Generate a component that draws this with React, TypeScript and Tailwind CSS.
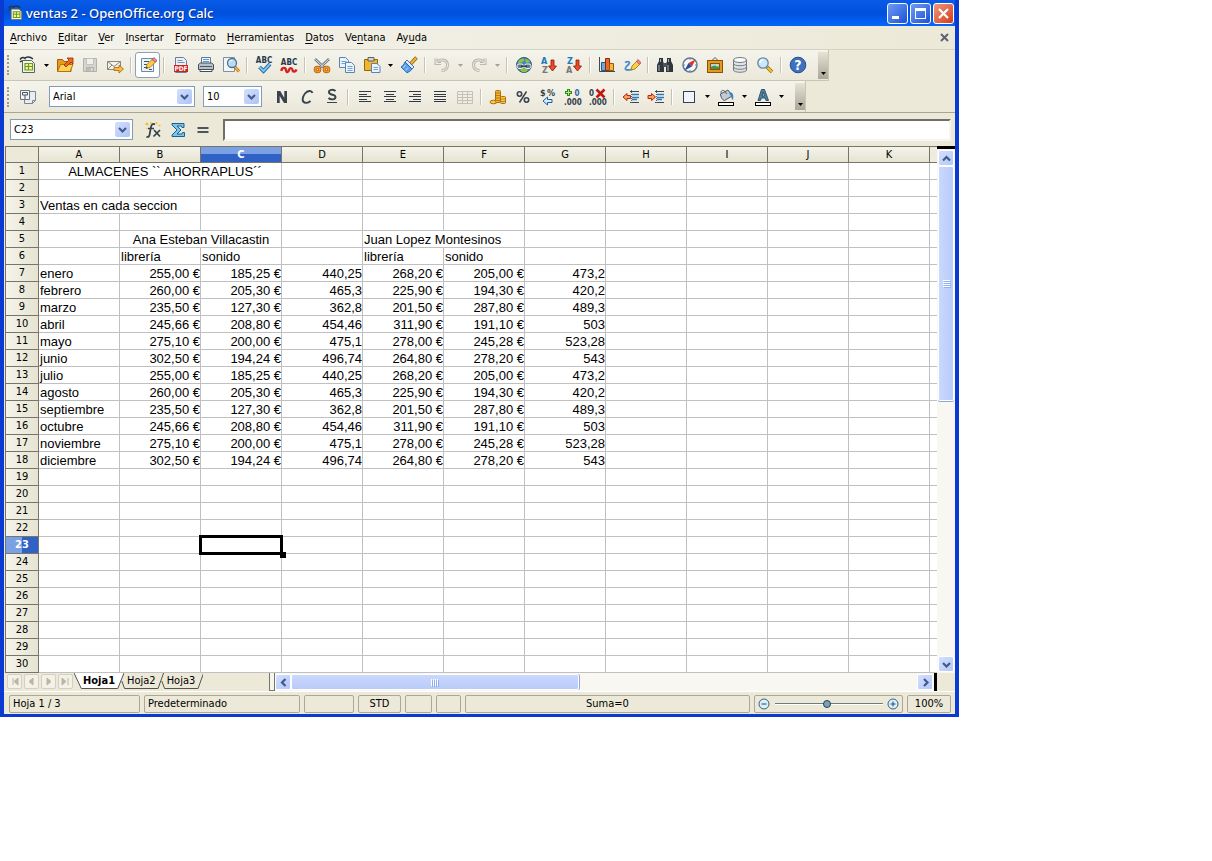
import type { ReactNode } from 'react';
import clsx from 'clsx';

type IconProps = { label: string; children: ReactNode };

const columns = ['A', 'B', 'C', 'D', 'E', 'F', 'G', 'H', 'I', 'J', 'K'];

const half = [
  ['255,00 €', '185,25 €', '440,25', '268,20 €', '205,00 €', '473,2'],
  ['260,00 €', '205,30 €', '465,3', '225,90 €', '194,30 €', '420,2'],
  ['235,50 €', '127,30 €', '362,8', '201,50 €', '287,80 €', '489,3'],
  ['245,66 €', '208,80 €', '454,46', '311,90 €', '191,10 €', '503'],
  ['275,10 €', '200,00 €', '475,1', '278,00 €', '245,28 €', '523,28'],
  ['302,50 €', '194,24 €', '496,74', '264,80 €', '278,20 €', '543'],
];

const months = [
  'enero', 'febrero', 'marzo', 'abril', 'mayo', 'junio',
  'julio', 'agosto', 'septiembre', 'octubre', 'noviembre', 'diciembre',
];

type Cell = { text: string; span?: number; align?: 'center' | 'right' };

const cells: Record<string, Cell> = {
  A1: { text: 'ALMACENES `` AHORRAPLUS´´', span: 3, align: 'center' },
  A3: { text: 'Ventas en cada seccion', span: 2 },
  B5: { text: 'Ana Esteban Villacastin', span: 2, align: 'center' },
  E5: { text: 'Juan Lopez Montesinos', span: 2 },
  B6: { text: 'librería' },
  C6: { text: 'sonido' },
  E6: { text: 'librería' },
  F6: { text: 'sonido' },
};

months.forEach((month, i) => {
  cells[`A${i + 7}`] = { text: month };
  half[i % 6].forEach((value, c) => {
    cells[`${columns[c + 1]}${i + 7}`] = { text: value, align: 'right' };
  });
});

/* toolbar pieces */

function Tool({ label, children }: IconProps) {
  return (
    <button type="button" aria-label={label} className="flex h-6 w-[25px] shrink-0 items-center justify-center">
      <svg width="18" height="18" viewBox="0 0 18 18" fill="none" aria-hidden="true">
        {children}
      </svg>
    </button>
  );
}

function Arrow({ label, off }: { label: string; off?: boolean }) {
  return (
    <button type="button" aria-label={label} className="flex h-6 w-3 shrink-0 items-center justify-center">
      <svg width="5" height="3" viewBox="0 0 5 3" aria-hidden="true">
        <path d="M0 0h5L2.5 3z" fill={off ? '#a5a396' : '#000'} />
      </svg>
    </button>
  );
}

function Sep() {
  return <span className="mx-[3px] h-4 w-0.5 shrink-0 border-r border-l border-r-white border-l-[#c5c2b2]" />;
}

function Grip() {
  return <span className="mr-1.5 ml-[3px] h-5 w-0 shrink-0 border-l-2 border-dotted border-[#9d9b8c]" />;
}

function Overflow() {
  return (
    <button
      type="button"
      aria-label="Más botones"
      className="flex h-[27px] w-2.5 items-end justify-center bg-linear-to-b from-[#e6e3d5] to-[#a9a798] pb-1"
    >
      <svg width="5" height="3" viewBox="0 0 5 3" aria-hidden="true">
        <path d="M0 0h5L2.5 3z" fill="#000" />
      </svg>
    </button>
  );
}

function Chevron({ dir }: { dir: 'up' | 'down' | 'left' | 'right' }) {
  const paths = {
    up: 'M1 6.5 4.5 3 8 6.5',
    down: 'M1 3 4.5 6.5 8 3',
    left: 'M6.5 1 3 4.5 6.5 8',
    right: 'M3 1l3.5 3.5L3 8',
  };
  return (
    <svg width="9" height="9" viewBox="0 0 9 9" fill="none" aria-hidden="true">
      <path d={paths[dir]} stroke="#42598c" strokeWidth="2.2" />
    </svg>
  );
}

function Combo({ label, value, className }: { label: string; value: string; className: string }) {
  return (
    <span className={clsx('relative flex h-[21px] shrink-0 items-center border border-[#7f9db9] bg-white', className)}>
      <select aria-label={label} defaultValue={value} className="h-full w-full appearance-none bg-transparent pl-[3px] outline-none">
        <option>{value}</option>
      </select>
      <span className="pointer-events-none absolute top-0.5 right-0.5 bottom-0.5 flex w-[15px] items-center justify-center rounded-[2px] bg-linear-to-br from-[#d3dffd] to-[#aec3f5]">
        <Chevron dir="down" />
      </span>
    </span>
  );
}

function SheetGlyph() {
  return (
    <>
      <path d="M1 3.500c2-3 4-2 5-1 1-2 5-2 8 .5M1 6c2-2 3-1.500 4-1" stroke="#2c3338" strokeWidth="1.500" />
      <path d="M3.500 4.500h9l3 3v9h-12z" fill="#f1f4ee" stroke="#59655c" />
      <path d="M6 7.500h7.500v6.500H6z" fill="#f3f79a" stroke="#6d9c1d" strokeWidth="1.200" />
      <path d="M6 10.500h7.500M9.500 7.500V14" stroke="#6d9c1d" strokeWidth="1.200" />
    </>
  );
}

function TextLines({ rows }: { rows: [number, number][] }) {
  return (
    <path
      d={rows.map(([x, w], i) => `M${x} ${3.5 + i * 2.5}h${w}`).join('')}
      stroke="#333a40"
      shapeRendering="crispEdges"
    />
  );
}

function StandardBar() {
  return (
    <div role="toolbar" aria-label="Estándar" className="flex h-[31px] w-[825px] max-w-full items-center overflow-hidden border-r border-b border-[#c9c6b6] bg-linear-to-b from-[#f5f4ec] to-[#ebe8d9]">
      <Grip />
      <Tool label="Nuevo"><SheetGlyph /></Tool>
      <Arrow label="Tipos de documento" />
      <Tool label="Abrir">
        <path d="M1.500 15.500v-12h5l1.500 2h7v10z" fill="#e79a1c" stroke="#a85f06" />
        <path d="M1.500 15.500l3-7h12.500l-3 7z" fill="#fcd354" stroke="#b8720c" />
        <path d="M8 9l5-5-2-2h6v6l-2-2-5 5z" fill="#f26a1b" stroke="#8e2c06" strokeWidth=".8" />
      </Tool>
      <Tool label="Guardar">
        <path d="M2.500 2.500h13v13h-13z" fill="#d5d4d0" stroke="#b2b1ab" />
        <path d="M5.500 2.500h7v6h-7z" fill="#f0f0ec" stroke="#c2c1bb" />
        <path d="M5.500 11.500h7v4h-7z" fill="#bdbcb6" stroke="#b2b1ab" />
        <path d="M10 12.500h1.500v2H10z" fill="#f2f2ee" />
      </Tool>
      <Tool label="Documento como e-mail">
        <path d="M1.500 5.500h13v8h-13z" fill="#f4f3ee" stroke="#88867c" />
        <path d="M1.500 5.500l6.500 5 6.500-5M1.500 13.500l4.500-4.500" stroke="#88867c" />
        <path d="M8 11.500h5v-2.500l4.500 4-4.500 4v-2.500H8z" fill="#fdbb3c" stroke="#a4620d" strokeWidth=".8" />
      </Tool>
      <Sep />
      <span className="flex h-[26px] w-[25px] shrink-0 items-center justify-center rounded-[3px] border border-[#8aa2b8] bg-white">
        <Tool label="Editar archivo">
          <path d="M2.500 2.500h12v13h-12z" fill="#eaf2fa" stroke="#6c89a6" />
          <path d="M5 5.500h5M5 8.500h3M5 11.500h2M10 13.500h3" stroke="#3b5168" />
          <path d="M7 12.500l1-4 6-6 3 3-6 6z" fill="#fbcf44" stroke="#9c7014" strokeWidth=".8" />
          <path d="M13 3.500l1.800-2L18 4.500l-1.800 1.800z" fill="#ee8690" stroke="#a4434d" strokeWidth=".7" />
          <path d="M7 12.500l.5-2 1.500 1.500z" fill="#333" />
        </Tool>
      </span>
      <Sep />
      <Tool label="Exportar en formato PDF">
        <path d="M3.500 1.500h8l3 3v12h-11z" fill="#e8eff7" stroke="#6b7e95" />
        <path d="M5.500 4.500h5M5.500 6.500h7" stroke="#7696b5" />
        <rect x="2" y="9" width="14" height="7" fill="#cf1f1f" />
        <text x="9" y="15" textAnchor="middle" fontSize="6.500" fontWeight="bold" fill="#fff">PDF</text>
      </Tool>
      <Tool label="Imprimir">
        <path d="M4.500 1.500h9v6h-9z" fill="#eef6ff" stroke="#66798c" />
        <path d="M6 3.500h6M6 5.500h6" stroke="#5a9ad5" />
        <path d="M1.500 8.500l2-1.500h11l2 1.500v5h-15z" fill="#b9c1c9" stroke="#414d59" />
        <path d="M3 13.500h12v2H3z" fill="#fff" stroke="#414d59" />
        <path d="M3 10.500h12" stroke="#4b5763" />
      </Tool>
      <Tool label="Vista preliminar">
        <path d="M1.500 1.500h11v14h-11z" fill="#f1f5fa" stroke="#7e90a4" />
        <path d="M12.500 10.500l4.500 5" stroke="#c27718" strokeWidth="3" />
        <path d="M13 11l3.800 4.300" stroke="#f8b945" strokeWidth="1.300" />
        <circle cx="10" cy="7" r="4.500" fill="#b7dcf5" stroke="#4f7391" strokeWidth="1.300" />
        <path d="M7.500 6.500q.8-2.500 3-2.300" stroke="#fff" />
      </Tool>
      <Sep />
      <Tool label="Revisión ortográfica">
        <text x="9" y="7" textAnchor="middle" fontSize="8" fontWeight="bold" fill="#26384a">ABC</text>
        <path d="M4.500 11l4 4 6.500-7" stroke="#155c98" strokeWidth="3.800" />
        <path d="M4.500 11l4 4 6.500-7" stroke="#7dc7ef" strokeWidth="2" />
      </Tool>
      <Tool label="Revisión automática">
        <text x="9" y="9" textAnchor="middle" fontSize="8" fontWeight="bold" fill="#26384a">ABC</text>
        <path d="M1.500 15c0-4 4-4 4.500-1s2.500 2.500 3 0 3-2.500 3.500 0 3 2 4-.5" stroke="#d42020" strokeWidth="2.400" />
      </Tool>
      <Sep />
      <Tool label="Cortar">
        <path d="M2 3l9.500 9M16 3l-9.500 9" stroke="#6f7b86" strokeWidth="2.600" />
        <path d="M2.300 3.300l9 8.500M15.700 3.300l-9 8.500" stroke="#dce4ea" />
        <circle cx="4.500" cy="13.500" r="2.300" stroke="#b65d08" strokeWidth="3" />
        <circle cx="13.500" cy="13.500" r="2.300" stroke="#b65d08" strokeWidth="3" />
        <circle cx="4.500" cy="13.500" r="2.300" stroke="#f3992a" strokeWidth="1.500" />
        <circle cx="13.500" cy="13.500" r="2.300" stroke="#f3992a" strokeWidth="1.500" />
      </Tool>
      <Tool label="Copiar">
        <path d="M1.500 1.500h6l3 3v7h-9z" fill="#eaf2fb" stroke="#5a83ae" />
        <path d="M3.500 5.500h5M3.500 7.500h5" stroke="#70a2d2" />
        <path d="M7.500 6.500h6l3 3v7h-9z" fill="#eaf2fb" stroke="#5a83ae" />
        <path d="M9.500 10.500h5M9.500 12.500h5M9.500 14.500h5" stroke="#70a2d2" />
      </Tool>
      <Tool label="Pegar">
        <path d="M1.500 3.500h13v11h-13z" fill="#f2b62c" stroke="#94660c" />
        <path d="M5 1.500h6v3.500H5z" fill="#d4d5d6" stroke="#5d605f" />
        <path d="M8.500 7.500h5.500l3 3v6h-8.500z" fill="#eaf2fb" stroke="#5a83ae" />
        <path d="M10.500 11.500h4.500M10.500 13.500h4.500" stroke="#70a2d2" />
      </Tool>
      <Arrow label="Opciones de pegado" />
      <Tool label="Pincel de formato">
        <path d="M16.500 1.500l-5.500 6" stroke="#8f6013" strokeWidth="3.600" />
        <path d="M16.200 1.800L11 7.500" stroke="#f7b92e" strokeWidth="2" />
        <path d="M7 4l7 7-2 2-7-7z" fill="#dbeaf8" stroke="#2c63a7" strokeWidth=".9" />
        <path d="M5 6l7 7c-1 2-3.500 3-5 3.800L1 11c2-1 3-3 4-5z" fill="#5a9fe8" stroke="#1d5db0" strokeWidth=".9" />
        <path d="M5.500 9l-2.500 3M8 11.500L5.500 14.500" stroke="#bfdcf8" />
      </Tool>
      <Sep />
      <Tool label="Deshacer">
        <path d="M3 2.500v5h5M3.500 7c3.500-5 11-3.500 11 2 0 3-2 5.500-6 5.500" stroke="#bbb9af" strokeWidth="3" />
        <path d="M3 2.500v5h5M3.500 7c3.500-5 11-3.500 11 2 0 3-2 5.500-6 5.500" stroke="#efede3" />
      </Tool>
      <Arrow label="Lista de deshacer" off />
      <Tool label="Restaurar">
        <path d="M15 2.500v5h-5M14.500 7c-3.500-5-11-3.500-11 2 0 3 2 5.500 6 5.500" stroke="#bbb9af" strokeWidth="3" />
        <path d="M15 2.500v5h-5M14.500 7c-3.500-5-11-3.500-11 2 0 3 2 5.500 6 5.500" stroke="#efede3" />
      </Tool>
      <Arrow label="Lista de restaurar" off />
      <Sep />
      <Tool label="Hiperenlace">
        <circle cx="9" cy="9" r="7.500" fill="#4b83b8" stroke="#31577a" />
        <path d="M3 6c2-4 5-4 6-3s-1 3-2 3-2 2-4 1zM10 3c3 0 4 1 5 3l-4 1zM5 14c2-2 6-2 8 0-2 3-6 3-8 0z" fill="#8cc63f" />
        <rect x="2" y="8" width="6.500" height="4.500" rx="2" fill="#687987" stroke="#eef3f6" />
        <rect x="9.500" y="8" width="6.500" height="4.500" rx="2" fill="#687987" stroke="#eef3f6" />
        <path d="M6 10.200h6" stroke="#24343f" strokeWidth="1.400" />
      </Tool>
      <Tool label="Orden ascendente">
        <text x="1" y="8" fontSize="9" fontWeight="bold" fill="#167bb8">A</text>
        <text x="2" y="17" fontSize="9" fontWeight="bold" fill="#77777a">Z</text>
        <path d="M11 4h3v6h2.500l-4 5-4-5H11z" fill="#ee4a26" stroke="#8c1606" strokeWidth=".8" />
      </Tool>
      <Tool label="Orden descendente">
        <text x="2" y="8" fontSize="9" fontWeight="bold" fill="#167bb8">Z</text>
        <text x="1" y="17" fontSize="9" fontWeight="bold" fill="#77777a">A</text>
        <path d="M11 4h3v6h2.500l-4 5-4-5H11z" fill="#ee4a26" stroke="#8c1606" strokeWidth=".8" />
      </Tool>
      <Sep />
      <Tool label="Gráfico">
        <path d="M1.500 1v14.500H17" stroke="#3c4a58" />
        <path d="M3.500 6.500h4v8h-4z" fill="#67aede" stroke="#20567f" />
        <path d="M7.500 2.500h4v12h-4z" fill="#ee6429" stroke="#8d2a06" />
        <path d="M11.500 7.500h4v7h-4z" fill="#f8b43b" stroke="#935b0a" />
      </Tool>
      <Tool label="Mostrar funciones de dibujo">
        <path d="M2 6.500c4-2 6 0 3 2.500s-4 5 0 5 4-1 5-1.500" stroke="#4a8ccc" strokeWidth="1.800" />
        <path d="M8 14l1-4 5.500-5.500 3 3-5.500 5.500z" fill="#fbcf44" stroke="#9c7014" strokeWidth=".8" />
        <path d="M13.500 5.500l1.500-2 3 3-1.500 1.700z" fill="#ee8690" stroke="#a4434d" strokeWidth=".7" />
      </Tool>
      <Sep />
      <Tool label="Buscar y reemplazar">
        <path d="M3 2h4v3l1 3v8H1V9l2-4zM15 2h-4v3l-1 3v8h7V9l-2-4z" fill="#30363c" />
        <path d="M7 7h4v4H7z" fill="#4b535a" />
        <path d="M3 9v6M12 9v6M4.500 3v3M12.500 3v3" stroke="#a7b0b7" />
      </Tool>
      <Tool label="Navegador">
        <circle cx="9" cy="9" r="7" fill="#f3f8fc" stroke="#63788b" strokeWidth="1.500" />
        <path d="M9 3v1M9 14v1M3 9h1M14 9h1" stroke="#63788b" />
        <path d="M14.500 3.500L11 10.500 7.500 7z" fill="#e33224" />
        <path d="M3.500 14.500L7.500 7l3.500 3.500z" fill="#274e9b" />
      </Tool>
      <Tool label="Gallery">
        <path d="M6 4.500L9 1.500l3 3" stroke="#67553b" />
        <rect x="1.500" y="4.500" width="15" height="12" fill="#e8981e" stroke="#87540a" />
        <rect x="4.500" y="7.500" width="9" height="6" fill="#a6d9ee" stroke="#87540a" />
        <path d="M5 13v-2q4-2.500 8 0v2z" fill="#45934c" />
        <circle cx="11" cy="9.500" r="1" fill="#fbe15b" />
      </Tool>
      <Tool label="Fuentes de datos">
        <path d="M2.500 4v10c0 3 13 3 13 0V4" fill="#dfe3e6" stroke="#727b82" />
        <ellipse cx="9" cy="4" rx="6.500" ry="2.500" fill="#f8f9fa" stroke="#727b82" />
        <path d="M2.500 7.500c0 3 13 3 13 0M2.500 11c0 3 13 3 13 0" stroke="#727b82" />
      </Tool>
      <Tool label="Escala">
        <path d="M11 11l5 5" stroke="#926a16" strokeWidth="3.600" />
        <path d="M11.500 11.500l4.500 4.500" stroke="#f6c13c" strokeWidth="2" />
        <circle cx="7" cy="7" r="5.200" fill="#cde7f9" stroke="#5f86a8" strokeWidth="1.300" />
        <path d="M4 7q.3-3 3-3" stroke="#fff" strokeWidth="1.500" />
      </Tool>
      <Sep />
      <Tool label="Ayuda">
        <circle cx="9" cy="9" r="7.800" fill="#3d70bd" stroke="#234f92" />
        <text x="9" y="14" textAnchor="middle" fontSize="14" fontWeight="bold" fill="#fff">?</text>
      </Tool>
      <span className="ml-auto flex"><Overflow /></span>
    </div>
  );
}

function IndentGlyph({ out }: { out?: boolean }) {
  return (
    <>
      <path d="M8 3.500h9M8 14.500h9" stroke="#3b4854" />
      <path d="M10 6.500h7M10 9.500h7M10 11.500h5" stroke="#2e7dbb" strokeWidth="1.400" />
      <path d="M9.500 2v14" stroke="#59656f" strokeDasharray="1 1" />
      <path
        d={out ? 'M1 9l4-3.500v2h3.500v3H5v2z' : 'M8.500 9l-4-3.500v2H1v3h3.500v2z'}
        fill="#f9a15d"
        stroke="#b52a0c"
      />
    </>
  );
}

function FormatBar() {
  return (
    <div role="toolbar" aria-label="Formato" className="flex h-[31px] w-[802px] max-w-full items-center overflow-hidden border-r border-[#c9c6b6] bg-linear-to-b from-[#f5f4ec] to-[#ebe8d9]">
      <Grip />
      <Tool label="Estilo y formato">
        <path d="M5.500 3.500h11v9l-3 3h-8z" fill="#e9edf1" stroke="#7c868f" />
        <path d="M1.500 2.500h9v9h-9z" fill="#f3f4f5" stroke="#6a747d" />
        <path d="M3.500 4.500h5v2.500h-5zM6 7v4" stroke="#4b555e" />
        <path d="M16.500 12.500h-3v3" stroke="#7c868f" />
      </Tool>
      <Combo label="Nombre de fuente" value="Arial" className="ml-[9px] w-[146px]" />
      <Combo label="Tamaño de fuente" value="10" className="mr-[7px] ml-2 w-[59px]" />
      <Tool label="Negrita">
        <path d="M4 15V3h3.300l4 7V3H14v12h-3L6.700 8v7z" fill="#3a434c" />
      </Tool>
      <Tool label="Cursiva">
        <path d="M14.500 5c-1-3-5-2.500-7.500.5s-3.500 8-.5 9 5-.5 6-1.500" stroke="#3a434c" strokeWidth="1.900" />
      </Tool>
      <Tool label="Subrayado">
        <path d="M12.500 3c-2-2-7-1.500-6.500 1.500s6.500 1.500 6.500 4.500-5 3-7 1" stroke="#3a434c" strokeWidth="1.900" />
        <path d="M4 14.500h10" stroke="#3a434c" />
      </Tool>
      <Sep />
      <Tool label="Alinear a la izquierda"><TextLines rows={[[3, 12], [3, 8], [3, 12], [3, 8], [3, 12]]} /></Tool>
      <Tool label="Centrar horizontalmente"><TextLines rows={[[3, 12], [5, 8], [3, 12], [5, 8], [3, 12]]} /></Tool>
      <Tool label="Alinear a la derecha"><TextLines rows={[[3, 12], [7, 8], [3, 12], [7, 8], [3, 12]]} /></Tool>
      <Tool label="Justificado"><TextLines rows={[[3, 12], [3, 12], [3, 12], [3, 12], [3, 12]]} /></Tool>
      <Tool label="Combinar celdas">
        <path d="M1.500 3.500h15v12h-15zM1.500 6.500h15M1.500 9.500h15M1.500 12.500h15M6.500 3.500v12M11.500 3.500v12" stroke="#c4c2b7" />
      </Tool>
      <Sep />
      <Tool label="Formato numérico: moneda">
        <ellipse cx="4.500" cy="14" rx="3.500" ry="1.800" fill="#f8c94e" stroke="#ad700d" />
        <rect x="6.500" y="2.500" width="5" height="12" rx="1" fill="#f2b02c" stroke="#ad700d" />
        <rect x="11.500" y="8.500" width="5" height="7" rx="1" fill="#f8c94e" stroke="#ad700d" />
        <path d="M6.500 5h5M6.500 7.500h5M6.500 10h5M6.500 12.500h5M12 11h4M12 13.500h4" stroke="#ad700d" strokeWidth=".8" />
      </Tool>
      <Tool label="Formato numérico: porcentaje">
        <circle cx="5.500" cy="6" r="2.200" stroke="#38434d" strokeWidth="1.600" />
        <circle cx="12.500" cy="12" r="2.200" stroke="#38434d" strokeWidth="1.600" />
        <path d="M12.500 3.500l-7 11" stroke="#38434d" strokeWidth="1.500" />
      </Tool>
      <Tool label="Formato numérico: predeterminado">
        <text x="1" y="8" fontSize="9" fontWeight="bold" fill="#35414c">$</text>
        <text x="8" y="8" fontSize="9" fontWeight="bold" fill="#35414c">%</text>
        <path d="M4 13l4.500-4v2.500H13v3H8.500V17z" fill="#d8ecfb" stroke="#1860a8" />
      </Tool>
      <Tool label="Agregar decimal">
        <path d="M4.500 1v7M1 4.500h7" stroke="#2c8a17" strokeWidth="3" />
        <path d="M4.500 2v5M2 4.500h5" stroke="#b5eb84" />
        <text x="10.500" y="8" fontSize="8" fontWeight="bold" fill="#2b69a8">0</text>
        <text x="0" y="17" fontSize="8" fontWeight="bold" fill="#35414c">.000</text>
      </Tool>
      <Tool label="Eliminar decimal">
        <text x="0" y="8" fontSize="8" fontWeight="bold" fill="#35414c">0</text>
        <text x="0" y="17" fontSize="8" fontWeight="bold" fill="#35414c">.000</text>
        <path d="M7.500 1.500l8 8M15.500 1.500l-8 8" stroke="#bf1712" strokeWidth="2.600" />
      </Tool>
      <Sep />
      <Tool label="Reducir sangría"><IndentGlyph out /></Tool>
      <Tool label="Aumentar sangría"><IndentGlyph /></Tool>
      <Sep />
      <Tool label="Borde">
        <rect x="3.500" y="3.500" width="11" height="11" fill="#eff5fb" stroke="#34404b" />
      </Tool>
      <Arrow label="Estilos de borde" />
      <Tool label="Color de fondo">
        <path d="M3.500 6l7.500-4 4 6-7.500 4.500c-2 0-4-4-4-6.500z" fill="#c1cbd3" stroke="#4b5862" />
        <path d="M4.500 6c-2-4 3-5.500 5 0" stroke="#4b5862" />
        <path d="M12 4c4 0 5 3 4 8-2-1-1-4-3-5z" fill="#3d83bd" />
        <rect x="1.500" y="14.500" width="15" height="3" fill="#fff" stroke="#000" />
      </Tool>
      <Arrow label="Colores de fondo" />
      <Tool label="Color de fuente">
        <path d="M4 12.500L7.500 1.500h3l4 11H12l-.8-2.500H7.300l-.8 2.500zM8 8h2.500L9.200 4z" fill="#4a84a6" stroke="#2a4b62" strokeWidth=".9" />
        <rect x="1.500" y="14.500" width="15" height="3" fill="#fff" stroke="#000" />
      </Tool>
      <Arrow label="Colores de fuente" />
      <span className="ml-auto flex"><Overflow /></span>
    </div>
  );
}

const windowButton = 'flex size-[21px] items-center justify-center rounded-[3px] border border-white';

function TitleBar() {
  return (
    <header className="flex h-[26px] items-center bg-linear-to-b from-[#0a5be8] via-[#0050dd] to-[#0566fb] pr-px pl-1">
      <svg width="16" height="16" viewBox="0 0 18 18" fill="none" aria-hidden="true"><SheetGlyph /></svg>
      <h1 className="ml-0.5 font-['Noto_Sans',sans-serif] text-[13px] font-medium text-white [text-shadow:1px_1px_0_#0a2a8c]">
        ventas 2 - OpenOffice.org Calc
      </h1>
      <div className="ml-auto flex gap-0.5">
        <button type="button" aria-label="Minimizar" className={clsx(windowButton, 'bg-linear-to-br from-[#6f9bf5] to-[#1d4fd6]')}>
          <svg width="13" height="13" viewBox="0 0 13 13" aria-hidden="true"><path d="M1 9h7v3H1z" fill="#fff" /></svg>
        </button>
        <button type="button" aria-label="Maximizar" className={clsx(windowButton, 'bg-linear-to-br from-[#6f9bf5] to-[#1d4fd6]')}>
          <svg width="13" height="13" viewBox="0 0 13 13" aria-hidden="true"><path d="M1 1h11v11H1zM2 4v7h9V4z" fill="#fff" fillRule="evenodd" /></svg>
        </button>
        <button type="button" aria-label="Cerrar" className={clsx(windowButton, 'bg-linear-to-br from-[#f0957a] to-[#d03a10]')}>
          <svg width="13" height="13" viewBox="0 0 13 13" aria-hidden="true"><path d="M2 2l9 9M11 2l-9 9" stroke="#fff" strokeWidth="2.200" /></svg>
        </button>
      </div>
    </header>
  );
}

// text before the mnemonic, the mnemonic, text after it
const menus = [
  ['', 'A', 'rchivo'],
  ['', 'E', 'ditar'],
  ['', 'V', 'er'],
  ['', 'I', 'nsertar'],
  ['', 'F', 'ormato'],
  ['', 'H', 'erramientas'],
  ['', 'D', 'atos'],
  ['Ve', 'n', 'tana'],
  ['Ay', 'u', 'da'],
];

function MenuBar() {
  return (
    <nav aria-label="Menú" className="flex h-6 items-center gap-[11px] border-b border-[#d5d2c3] bg-linear-to-r from-[#f4f3ec] to-[#ece9d8] pr-1.5 pl-1.5">
      {menus.map(([before, key, after]) => (
        <button key={key} type="button">
          {before}
          <span className="underline underline-offset-2">{key}</span>
          {after}
        </button>
      ))}
      <button type="button" aria-label="Cerrar documento" className="ml-auto">
        <svg width="9" height="9" viewBox="0 0 9 9" aria-hidden="true">
          <path d="M1 1l7 7M8 1L1 8" stroke="#5a6470" strokeWidth="2" />
        </svg>
      </button>
    </nav>
  );
}

function FormulaBar() {
  return (
    <div className="flex h-[34px] items-center border-t border-[#a7a594] bg-[#ece9d8] pr-1 pl-1.5">
      <Combo label="Cuadro de nombre" value="C23" className="w-[123px]" />
      <span className="ml-[7px] flex">
        <Tool label="Asistente: funciones">
          <path d="M11 3.500c-2-1.500-3.500 0-4 2.500l-1.500 8c-.4 2-1.700 2.500-3 1.500M4 7.500h6" stroke="#34404b" strokeWidth="1.700" />
          <path d="M10 9l6 6.500M16 9l-6.500 6.500" stroke="#34404b" strokeWidth="1.700" />
          <path d="M3 1.500v3M1.500 3h3M7 1v2M12.500 1v2M14.500 4.500h2M3 7v1" stroke="#f0bd2b" strokeWidth="1.300" />
        </Tool>
        <Tool label="Suma">
          <path d="M3 2.500h12v4h-2l-.5-1.500H8l4 4-4 4h5l.5-1.500h2v4H3v-1.500L8 9 3 4z" fill="#7fc2ea" stroke="#13629b" />
        </Tool>
        <Tool label="Función">
          <path d="M3.500 7h11M3.500 11h11" stroke="#4b555e" strokeWidth="1.800" />
        </Tool>
      </span>
      <input
        aria-label="Línea de entrada"
        className="ml-2 h-[22px] min-w-0 flex-1 border-2 border-t-[#716f64] border-r-[#f6f5ef] border-b-[#f6f5ef] border-l-[#716f64] bg-white px-1 outline-none"
      />
    </div>
  );
}

const headBase = 'border-r border-b border-[#77756a] p-0';

function GridRow({ row }: { row: number }) {
  const tds: ReactNode[] = [];
  for (let c = 0; c < columns.length; ) {
    const cell = cells[`${columns[c]}${row}`];
    const span = cell?.span ?? 1;
    const selected = row === 23 && columns[c] === 'C';
    tds.push(
      <td
        key={c}
        colSpan={span}
        className={clsx(
          'border-r border-b border-[#c0c0c0] pt-0.5 pb-0 whitespace-nowrap',
          span === 3 ? 'pl-2.5' : 'pl-px',
          cell?.align === 'center' && 'text-center',
          cell?.align === 'right' && 'text-right',
          selected && 'relative',
        )}
      >
        {cell?.text}
        {selected && (
          <span className="absolute -inset-0.5 border-3 border-black">
            <span className="absolute -right-1.5 -bottom-1.5 size-1.5 bg-black" />
          </span>
        )}
      </td>,
    );
    c += span;
  }
  return (
    <tr className="h-[17px]">
      <th
        scope="row"
        className={clsx(
          headBase,
          "border-l font-['DejaVu_Sans_Condensed',sans-serif] text-[11px]",
          row === 23
            ? 'bg-linear-to-r from-[#7ba0e4] from-50% to-[#2f62c4] to-50% font-bold text-white'
            : 'bg-linear-to-r from-[#f5f4ea] to-[#e6e3d1] font-normal',
        )}
      >
        {row}
      </th>
      {tds}
      <td className="border-b border-[#c0c0c0] p-0" />
    </tr>
  );
}

function Grid() {
  return (
    <table className="w-full table-fixed border-separate border-spacing-0 bg-white font-['Liberation_Sans',Arial,sans-serif] text-[13px] leading-[14px]">
      <colgroup>
        <col className="w-[34px]" />
        {columns.map((c) => <col key={c} className="w-[81px]" />)}
        <col />
      </colgroup>
      <thead>
        <tr className="h-[17px] font-['DejaVu_Sans_Condensed',sans-serif] text-[11px] leading-[15px]">
          <td className={clsx(headBase, 'border-t border-l bg-[#ece9d8]')} />
          {columns.map((c) => (
            <th
              key={c}
              scope="col"
              className={clsx(
                headBase,
                'border-t',
                c === 'C'
                  ? 'bg-linear-to-b from-[#7ba0e4] from-50% to-[#2f62c4] to-50% font-bold text-white'
                  : 'bg-linear-to-b from-[#f5f4ea] to-[#e6e3d1] font-normal',
              )}
            >
              {c}
            </th>
          ))}
          <td className="border-t border-b border-[#77756a] bg-[#efecdf] p-0" />
        </tr>
      </thead>
      <tbody>
        {Array.from({ length: 30 }, (_, i) => <GridRow key={i} row={i + 1} />)}
      </tbody>
    </table>
  );
}

const scrollButton = 'flex size-4 shrink-0 items-center justify-center rounded-[2px] border border-white bg-linear-to-br from-[#d3dffd] to-[#b4c8f8]';

function VerticalScroll() {
  return (
    <div className="flex w-[18px] shrink-0 flex-col items-center bg-[#f8f7f2] pb-px">
      <span className="mb-px h-[3px] w-full shrink-0 bg-black" />
      <button type="button" aria-label="Subir" className={scrollButton}><Chevron dir="up" /></button>
      <div className="w-4 flex-1">
        <div className="flex h-[48%] flex-col items-center justify-center gap-px rounded-[2px] border border-white bg-linear-to-r from-[#cad8fd] to-[#b9cbf9] shadow-[0_1px_0_#8fa8d8]">
          {[0, 1, 2, 3].map((i) => <i key={i} className="h-px w-[7px] bg-white shadow-[1px_1px_0_#8cb0f8]" />)}
        </div>
      </div>
      <button type="button" aria-label="Bajar" className={scrollButton}><Chevron dir="down" /></button>
    </div>
  );
}

function HorizontalScroll() {
  return (
    <div className="flex h-[18px] min-w-0 flex-1 items-center bg-[#f8f7f2]">
      <button type="button" aria-label="Izquierda" className={scrollButton}><Chevron dir="left" /></button>
      <div className="h-4 flex-1">
        <div className="flex h-full w-[46%] items-center justify-center gap-px rounded-[2px] border border-white bg-linear-to-b from-[#cad8fd] to-[#b9cbf9] shadow-[1px_0_0_#8fa8d8]">
          {[0, 1, 2, 3].map((i) => <i key={i} className="h-[7px] w-px bg-white shadow-[1px_1px_0_#8cb0f8]" />)}
        </div>
      </div>
      <button type="button" aria-label="Derecha" className={scrollButton}><Chevron dir="right" /></button>
      <span className="ml-px h-full w-[3px] bg-black" />
    </div>
  );
}

const steps = [
  ['Primera hoja', 'M3 1v7M8 1v7L4 4.500z'],
  ['Hoja anterior', 'M6 1v7L2 4.500z'],
  ['Hoja siguiente', 'M3 1v7l4-3.500z'],
  ['Última hoja', 'M1 1v7l4-3.500zM7 1v7'],
];

function SheetTab({ name, active }: { name: string; active?: boolean }) {
  return (
    <button
      type="button"
      role="tab"
      aria-selected={!!active}
      className={clsx('relative -ml-[5px] h-4 leading-4', active ? 'z-10 px-[9px] font-bold' : 'px-2')}
    >
      <svg className="absolute inset-0 size-full" viewBox="0 0 48 16" preserveAspectRatio="none" aria-hidden="true">
        <path
          d={active ? 'M0 0l7 15.500h35L48 0' : 'M3 8l3 7.500h36L48 0'}
          fill={active ? '#fff' : '#ece9d8'}
          stroke="#55534a"
          vectorEffect="non-scaling-stroke"
        />
      </svg>
      <span className="relative">{name}</span>
    </button>
  );
}

function SheetBar() {
  return (
    <div className="flex h-[18px]">
      <div className="flex w-[266px] shrink-0 items-start border-r border-[#77756a] pl-[3px]">
        <div className="flex gap-0.5 pt-px">
          {steps.map(([label, d]) => (
            <button
              key={label}
              type="button"
              aria-label={label}
              disabled
              className="flex size-[15px] items-center justify-center rounded-[2px] border border-[#d3d0c0] bg-[#f3f1e8]"
            >
              <svg width="9" height="9" viewBox="0 0 9 9" aria-hidden="true">
                <path d={d} fill="#b9b6a4" stroke="#b9b6a4" />
              </svg>
            </button>
          ))}
        </div>
        <div role="tablist" aria-label="Hojas" className="ml-1.5 flex">
          <SheetTab name="Hoja1" active />
          <SheetTab name="Hoja2" />
          <SheetTab name="Hoja3" />
        </div>
      </div>
      <span className="w-[5px] shrink-0 border-r border-b border-[#77756a] bg-[#f6f5ee]" />
      <HorizontalScroll />
      <span className="w-[18px] shrink-0" />
    </div>
  );
}

const panel = 'flex h-[18px] items-center rounded-[2px] border border-[#aca899] px-[3px] whitespace-nowrap';

function StatusBar() {
  return (
    <footer className="flex items-center gap-1 border-t border-white pt-[3px] pr-1 pb-px pl-[5px]">
      <span className={clsx(panel, 'w-[131px]')}>Hoja 1 / 3</span>
      <span className={clsx(panel, 'w-[156px]')}>Predeterminado</span>
      <span className={clsx(panel, 'w-[50px]')} />
      <span className={clsx(panel, 'w-[43px] justify-center')}>STD</span>
      <span className={clsx(panel, 'w-[27px]')} />
      <span className={clsx(panel, 'w-[25px]')} />
      <span className={clsx(panel, 'flex-1 justify-center')}>Suma=0</span>
      <span className={clsx(panel, 'w-[149px] justify-between')}>
        <button type="button" aria-label="Reducir">
          <svg width="12" height="12" viewBox="0 0 12 12" fill="none" aria-hidden="true">
            <circle cx="6" cy="6" r="5" fill="#d9effb" stroke="#38617f" />
            <path d="M3.500 6h5" stroke="#1f4a6b" />
          </svg>
        </button>
        <input
          type="range"
          aria-label="Escala"
          min="0"
          max="100"
          defaultValue="48"
          className="h-3 w-[108px] appearance-none bg-transparent [&::-webkit-slider-runnable-track]:h-0.5 [&::-webkit-slider-runnable-track]:border-t [&::-webkit-slider-runnable-track]:border-[#6f7b80] [&::-webkit-slider-runnable-track]:bg-white [&::-webkit-slider-thumb]:-mt-1 [&::-webkit-slider-thumb]:size-2 [&::-webkit-slider-thumb]:appearance-none [&::-webkit-slider-thumb]:rounded-full [&::-webkit-slider-thumb]:border [&::-webkit-slider-thumb]:border-[#25425a] [&::-webkit-slider-thumb]:bg-[#7f9fb2]"
        />
        <button type="button" aria-label="Aumentar">
          <svg width="12" height="12" viewBox="0 0 12 12" fill="none" aria-hidden="true">
            <circle cx="6" cy="6" r="5" fill="#d9effb" stroke="#38617f" />
            <path d="M3.500 6h5M6 3.500v5" stroke="#1f4a6b" />
          </svg>
        </button>
      </span>
      <span className={clsx(panel, 'w-11 justify-center')}>100%</span>
    </footer>
  );
}

export default function App() {
  return (
    <div className="min-h-screen bg-white font-['DejaVu_Sans_Condensed',sans-serif] text-[11px] leading-[14px] text-black">
      <main className="w-full max-w-[959px] overflow-hidden border-r-4 border-b-3 border-l-4 border-[#0a3ad2] bg-[#ece9d8]">
        <TitleBar />
        <MenuBar />
        <StandardBar />
        <FormatBar />
        <FormulaBar />
        <div className="flex pl-px">
          <div className="min-w-0 flex-1 overflow-hidden"><Grid /></div>
          <VerticalScroll />
        </div>
        <SheetBar />
        <StatusBar />
      </main>
    </div>
  );
}
